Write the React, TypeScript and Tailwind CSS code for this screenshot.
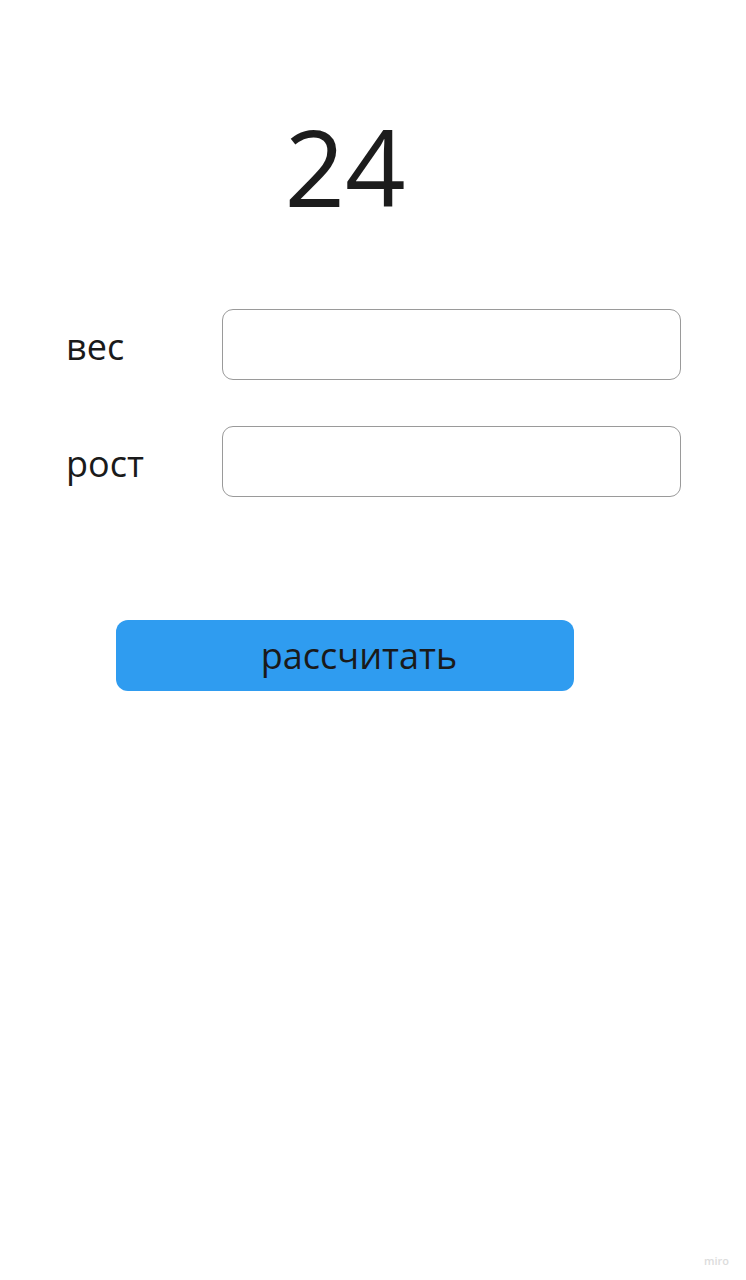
import React from "react";

export default function App() {
  return (
    <div
      className="relative w-[746px] h-[1280px] bg-white text-[#1a1a1a]"
      style={{ fontFamily: '"Open Sans", "Noto Sans", sans-serif' }}
    >
      <div className="flex flex-col pt-[113px]">
        <div className="h-[106px] text-[106px] leading-none text-center pr-[56px] text-[#1c1c1c]">
          24
        </div>
        <div className="mt-[90px] flex flex-col gap-[46px] pl-[66px]">
          <div className="flex items-center h-[71px]">
            <div className="w-[156px] text-[36px] leading-none pt-[5px]">вес</div>
            <input
              className="w-[459px] h-[71px] rounded-[11px] border border-[#9a9a9a] bg-white outline-none"
              aria-label="вес"
            />
          </div>
          <div className="flex items-center h-[71px]">
            <div className="w-[156px] text-[36px] leading-none pt-[5px]">рост</div>
            <input
              className="w-[459px] h-[71px] rounded-[11px] border border-[#9a9a9a] bg-white outline-none"
              aria-label="рост"
            />
          </div>
        </div>
        <div className="mt-[123px] pl-[116px]">
          <button className="w-[458px] h-[71px] rounded-[12px] bg-[#2f9cf0] text-[36px] leading-none text-[#1a1a1a] pl-[28px]">
            рассчитать
          </button>
        </div>
      </div>
      <div className="absolute right-[17px] bottom-[14px] text-[11px] font-semibold text-[#dcdcdc] leading-none">
        miro
      </div>
    </div>
  );
}
